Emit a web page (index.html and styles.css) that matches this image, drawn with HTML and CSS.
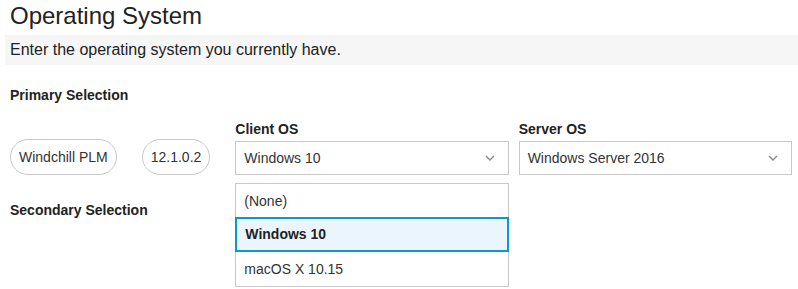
FILE: index.html
```html
<!DOCTYPE html>
<html lang="en">
<head>
  <meta charset="UTF-8">
  <meta name="viewport" content="width=device-width, initial-scale=1.0">
  <title>Operating System</title>
  <link rel="stylesheet" href="styles.css">
</head>
<body>
  <div class="page">
    <h1 class="page-title">Operating System</h1>
    <div class="page-intro">Enter the operating system you currently have.</div>

    <div class="section-label primary-label">Primary Selection</div>

    <div class="selection-row">
      <span class="pill">Windchill PLM</span>
      <span class="pill">12.1.0.2</span>

      <div class="field client-field">
        <div class="field-label">Client OS</div>
        <div class="select">
          <span class="select-value">Windows 10</span>
          <svg class="chevron" width="10" height="6" viewBox="0 0 10 6"><path d="M1 1 L5 5 L9 1" fill="none" stroke="#8a8a8a" stroke-width="1.4"/></svg>
        </div>
        <ul class="dropdown">
          <li class="option">(None)</li>
          <li class="option active">Windows 10</li>
          <li class="option">macOS X 10.15</li>
        </ul>
      </div>

      <div class="field">
        <div class="field-label">Server OS</div>
        <div class="select">
          <span class="select-value">Windows Server 2016</span>
          <svg class="chevron" width="10" height="6" viewBox="0 0 10 6"><path d="M1 1 L5 5 L9 1" fill="none" stroke="#8a8a8a" stroke-width="1.4"/></svg>
        </div>
      </div>
    </div>

    <div class="section-label secondary-label">Secondary Selection</div>
  </div>
</body>
</html>
```

FILE: styles.css
```css
* {
  box-sizing: border-box;
}

html,
body {
  min-height: 100%;
}

body {
  margin: 0;
  padding: 0;
  font-family: 'Liberation Sans', Arial, sans-serif;
  color: #222;
  background: #fff;
}

.page {
  min-height: 289px;
  padding: 2px 6px 0 10px;
}

.page-title {
  margin: 0;
  font-size: 24px;
  font-weight: normal;
  line-height: 28px;
  color: #222;
}

.page-intro {
  margin: 5px -6px 0 -5px;
  padding-left: 5px;
  height: 30px;
  line-height: 30px;
  font-size: 16px;
  background: #f6f6f6;
  color: #222;
}

.section-label {
  font-size: 14px;
  font-weight: bold;
  line-height: 18px;
  color: #222;
}

.primary-label {
  margin-top: 21px;
}

.secondary-label {
  margin-top: 26px;
}

.selection-row {
  display: flex;
  align-items: flex-end;
  gap: 25px;
  margin-top: 16px;
}

.pill {
  display: flex;
  align-items: center;
  height: 36px;
  padding: 0 8px;
  border: 1px solid #c8c8c8;
  border-radius: 18px;
  font-size: 14px;
  color: #333;
  white-space: nowrap;
}

.field {
  flex: 1;
  position: relative;
}

/* server column sits closer than the pills do */
.client-field {
  margin-right: -15px;
}

.field-label {
  font-size: 14px;
  font-weight: bold;
  line-height: 18px;
  margin-bottom: 3px;
}

.select {
  display: flex;
  align-items: center;
  justify-content: space-between;
  height: 34px;
  padding: 0 13px 0 8px;
  border: 1px solid #c8c8c8;
  font-size: 14px;
  color: #333;
}

.chevron {
  display: block;
}

.dropdown {
  position: absolute;
  top: calc(100% + 8px);
  left: 0;
  right: 0;
  z-index: 10;
  margin: 0;
  padding: 0;
  list-style: none;
  border: 1px solid #c8c8c8;
  background: #fff;
}

.option {
  height: 34px;
  line-height: 34px;
  padding-left: 8px;
  font-size: 14px;
  color: #333;
}

.option.active {
  margin: -1px -1px 0;
  height: 35px;
  line-height: 31px;
  padding-left: 8px;
  border: 2px solid #0e97cb;
  background: #eaf5fd;
  font-weight: bold;
  color: #222;
}
```
